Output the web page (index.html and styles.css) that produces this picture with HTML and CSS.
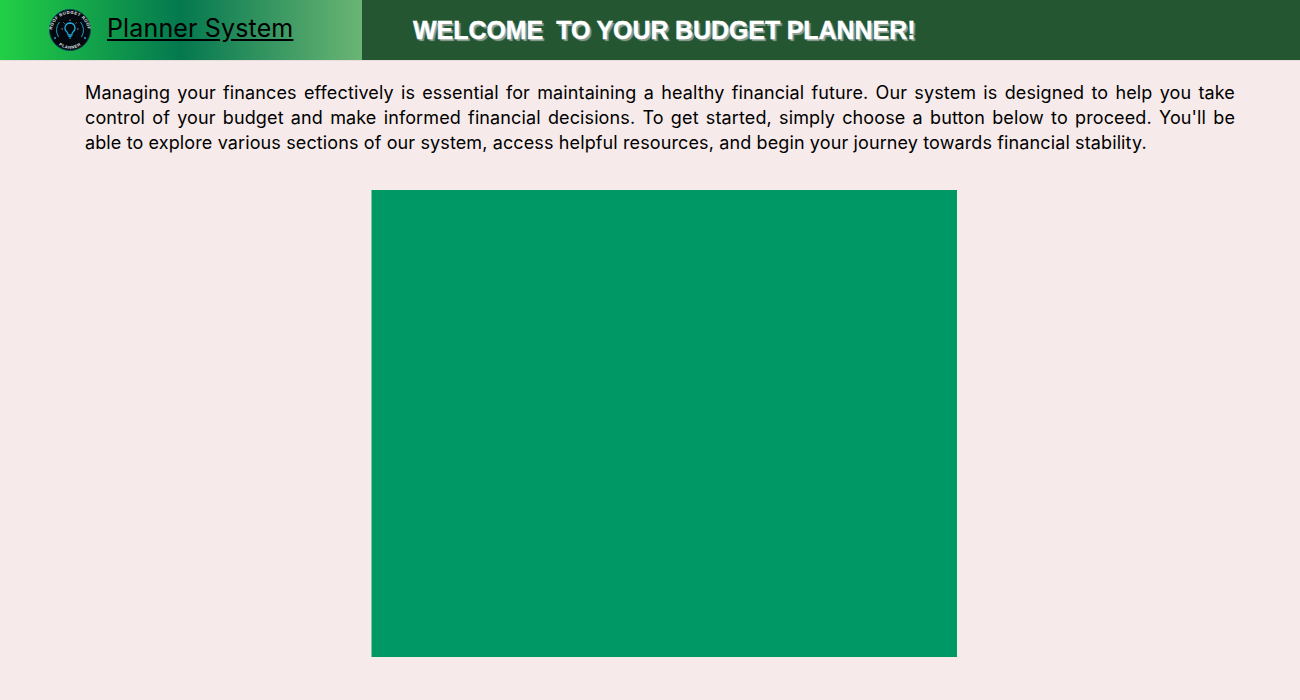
FILE: index.html
```html
<!DOCTYPE html>
<html lang="en">
<head>
    <meta charset="UTF-8">
    <meta name="viewport" content="width=device-width, initial-scale=1.0">
    <title>Budget Planner</title>
    <link rel="stylesheet" href="styles.css">
</head>
<body>
    <header class="topbar">
        <div class="brand">
            <svg class="logo" viewBox="0 0 42 42" width="42" height="42">
                <defs>
                    <path id="arcTop" d="M5.500 32a18 18 0 1 1 31 0"/>
                    <path id="arcBottom" d="M6 32a18.500 18.500 0 0 0 30 0"/>
                </defs>
                <circle cx="21" cy="21" r="20.500" fill="#03090f" stroke="#0b4a5a" stroke-width="1"/>
                <text class="logo-text"><textPath href="#arcTop" startOffset="50%" text-anchor="middle">ROOF BUDGET ROOF</textPath></text>
                <text class="logo-text"><textPath href="#arcBottom" startOffset="50%" text-anchor="middle">PLANNER</textPath></text>
                <path d="M9.500 28a13.500 13.500 0 0 1 1-15M32.500 28a13.500 13.500 0 0 0-1-15" fill="none" stroke="#1c9cc4" stroke-width="1"/>
                <path d="M21 14a5 5 0 0 1 3.200 8.800c-.9.800-1.200 1.700-1.400 3.200h-3.600c-.2-1.500-.5-2.400-1.400-3.200A5 5 0 0 1 21 14z" fill="none" stroke="#22a7d4" stroke-width="1.300"/>
                <path d="M19.400 27.500h3.200M19.900 29h2.200" stroke="#22a7d4" stroke-width="1"/>
                <path d="M21 10.500v1.500M14.500 13.500l1 1M27.500 13.500l-1 1M12.500 20h1.500M28 20h1.500" stroke="#c8d4d8" stroke-width=".7"/>
                <circle cx="6" cy="29" r="1" fill="#22a7d4"/>
                <circle cx="36" cy="29" r="1" fill="#22a7d4"/>
            </svg>
            <span class="brand-name">Planner System</span>
        </div>
        <div class="welcome">
            <h1>WELCOME&nbsp; TO YOUR BUDGET PLANNER!</h1>
        </div>
    </header>
    <main class="content">
        <p class="intro">Managing your finances effectively is essential for maintaining a healthy financial future. Our system is designed to help you take control of your budget and make informed financial decisions. To get started, simply choose a button below to proceed. You'll be able to explore various sections of our system, access helpful resources, and begin your journey towards financial stability.</p>
        <div class="panel"></div>
    </main>
</body>
</html>
```

FILE: styles.css
```css
html, body {
    height: 100%;
}
body {
    margin: 0;
    overflow: hidden;
    font-family: 'Inter', sans-serif;
    background: #f6eaea;
    color: #000;
}
.topbar {
    display: flex;
    height: 60px;
    border-bottom: 1px solid #e6dede;
}
.brand {
    width: 362px;
    padding-left: 49px;
    padding-bottom: 4px;
    box-sizing: border-box;
    display: flex;
    align-items: center;
    gap: 16px;
    background: linear-gradient(to right, #22cf45 0%, #04784f 50%, #6ab574 100%);
}
.logo {
    flex-shrink: 0;
    margin-top: 4px;
}
.logo-text {
    font-family: 'Liberation Sans', sans-serif;
    font-size: 4.200px;
    font-weight: bold;
    letter-spacing: .5px;
    fill: #e4e9eb;
}
.brand-name {
    font-size: 25px;
    letter-spacing: .15px;
    text-decoration: underline;
    color: #000;
}
.welcome {
    flex: 1;
    display: flex;
    align-items: center;
    padding-left: 51px;
    background: #245632;
}
.welcome h1 {
    margin: 0;
    font-family: 'Liberation Sans', sans-serif;
    font-size: 25px;
    font-weight: bold;
    letter-spacing: -.05px;
    word-spacing: -.4px;
    color: #fff;
    -webkit-text-stroke: .4px #fff;
    text-shadow: 2px 2px 1px #8f9f94;
}
.content {
    display: flex;
    flex-direction: column;
    align-items: flex-start;
}
.intro {
    margin: 19px 65px 0 85px;
    font-size: 18px;
    line-height: 25px;
    letter-spacing: .12px;
    text-align: justify;
}
.panel {
    width: 586px;
    height: 467px;
    margin: 35px 0 0 371px;
    box-sizing: border-box;
    border-left: 1px solid #7cc2a6;
    background: #009966;
}
```
